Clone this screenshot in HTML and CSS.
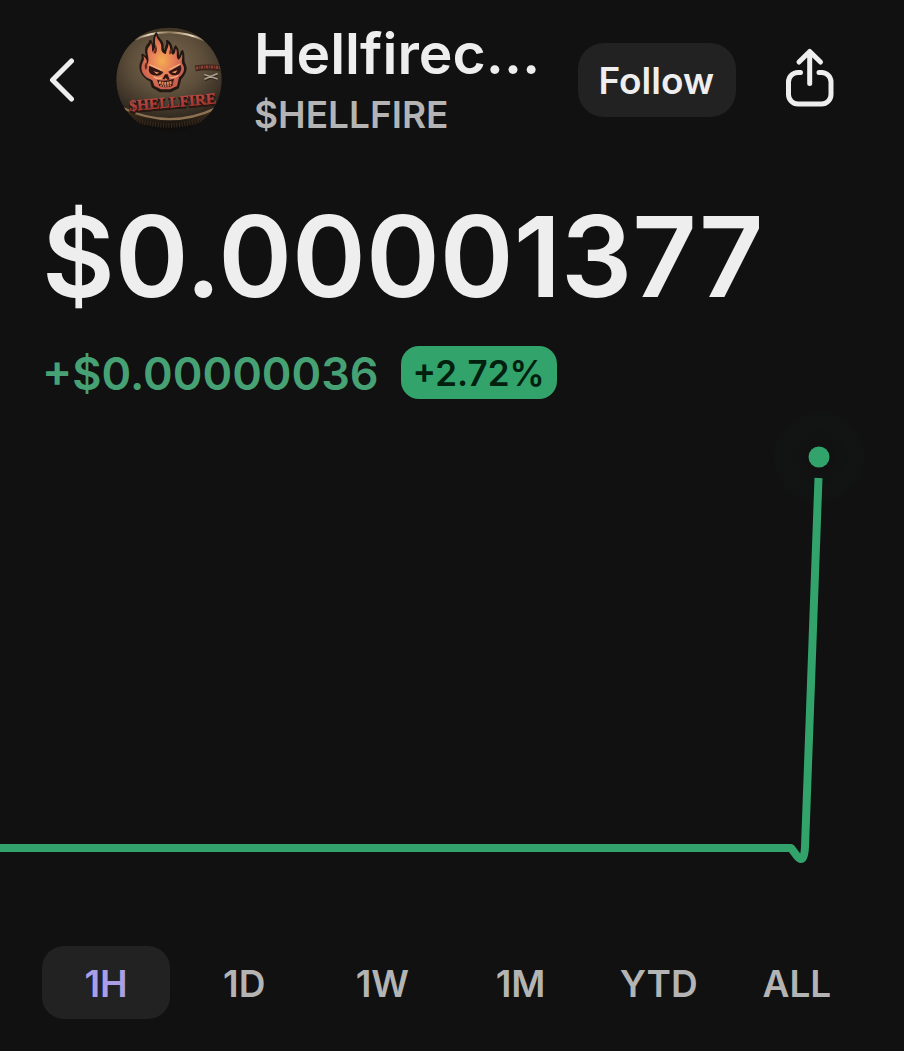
FILE: index.html
```html
<!DOCTYPE html>
<html lang="en">
<head>
<meta charset="utf-8">
<meta name="viewport" content="width=device-width, initial-scale=1">
<title>Hellfirecoin</title>
<link rel="stylesheet" href="styles.css">
</head>
<body>
<header class="header">
  <button class="icon-button back" aria-label="Back">
    <svg width="26" height="46" viewBox="0 0 26 46" fill="none" stroke="currentColor" stroke-width="5" stroke-linecap="round" stroke-linejoin="round"><path d="M22.500 4 3.500 23l19 19"/></svg>
  </button>
  <svg class="avatar" viewBox="45 36 318 318" role="img" aria-label="Token logo">
    <defs>
      <clipPath id="round"><circle cx="204" cy="195" r="158"/></clipPath>
      <radialGradient id="leather" cx=".48" cy=".36" r=".65">
        <stop offset="0" stop-color="#7d6b51"/><stop offset=".55" stop-color="#5c4d3a"/><stop offset="1" stop-color="#30281f"/>
      </radialGradient>
      <linearGradient id="base" x2="0" y2="1">
        <stop offset="0" stop-color="#493620"/><stop offset=".75" stop-color="#110f0e"/>
      </linearGradient>
      <radialGradient id="flame" cx=".48" cy=".47" r=".5">
        <stop offset="0" stop-color="#f5ad51"/><stop offset=".5" stop-color="#e88258"/><stop offset="1" stop-color="#c9604f"/>
      </radialGradient>
      <linearGradient id="seam"><stop offset="0" stop-color="#6e5740"/><stop offset=".2" stop-color="#eadbc1"/><stop offset=".5" stop-color="#8b7456"/><stop offset=".82" stop-color="#eadbc1"/><stop offset="1" stop-color="#62503b"/></linearGradient>
      <linearGradient id="lettering" x2="0" y2="1"><stop offset="0" stop-color="#c9564c"/><stop offset="1" stop-color="#982b29"/></linearGradient>
    </defs>
    <g clip-path="url(#round)">
      <path fill="#131110" d="M45 36h318v318H45z"/>
      <path fill="#423726" d="M105 66Q205 10 308 68L280 80H130z"/>
      <path fill="url(#leather)" d="M105 74Q204 26 308 74Q353 96 363 160V235Q360 267 340 282Q205 344 68 276Q48 254 45 220V170Q57 98 105 74z"/>
      <path fill="none" stroke="url(#seam)" stroke-width="6" d="M102 75Q148 51 205 52T310 77"/>
      <path fill="url(#base)" d="M68 280Q205 345 343 280L310 325Q205 380 108 325z"/>
      <path fill="none" stroke="#8c7152" stroke-width="7" d="M66 279Q205 345 344 280"/>
      <path fill="none" stroke="#3c2c1a" stroke-width="14" stroke-dasharray="3 5" d="M100 313Q204 350 306 312"/>
      <path fill="none" stroke="#3f3428" stroke-width="11" stroke-dasharray="2 5" d="M160 287Q200 293 240 285"/>
      <path fill="#241813" stroke="#241813" stroke-width="6" stroke-linejoin="round" d="M138 191C120 177 113 157 122 139C126 132 127 128 124 119C135 125 138 132 137 143C144 128 127 108 139 92C143 87 147 84 148 77C157 88 151 98 153 106C166 90 151 74 166 55C166 72 187 75 185 94C184 103 187 108 193 111C191 96 203 88 198 78C217 88 208 103 216 112C222 108 219 99 224 94C235 105 227 118 234 127C241 122 239 113 244 108C252 126 243 135 250 146C260 164 249 178 238 192L231 218L208 229H178L155 216L150 198z"/>
      <path fill="url(#flame)" d="M138 188C122 178 117 159 125 142C129 135 130 130 127 123C136 130 139 138 138 149C151 132 131 111 143 96C147 91 149 88 150 83C155 94 151 102 155 112C171 93 155 78 166 61C168 76 181 79 181 96C180 108 185 116 195 117C196 102 205 94 201 86C211 94 204 108 215 119C226 115 221 106 225 101C231 112 223 123 232 134C240 130 240 122 243 117C246 130 239 139 246 150C253 162 248 177 234 187L228 213L207 223H180L160 213L154 196z"/>
      <path fill="#6d291b" d="M157 114q8-17 5-27q11 13 2 29zm53-14q-8 10-4 19q13-7 4-19zm-74 40q-9 12-2 25q9-9 2-25z"/>
      <path fill="#321515" d="M145 152L187 171Q179 186 158 181Q145 178 143 166zM239 150L202 170Q210 184 229 180Q240 174 241 160zM192 178L184 193H191L194 188L199 194H206L200 178zM168 194Q192 202 219 191L214 213Q195 221 175 213z"/>
      <path fill="none" stroke="#f5ae7b" stroke-width="4" d="M145 149L184 166M205 164L237 147M158 185Q170 193 182 189M208 187Q221 190 232 181"/>
      <path fill="#f6965d" d="M157 169l18 4l-8 4zM212 172l18-6l-7 9z"/>
      <path fill="none" stroke="#e08a5c" stroke-width="9" stroke-dasharray="6 2" d="M174 202Q195 209 214 201"/>
      <path fill="none" stroke="#d17452" stroke-width="5" stroke-dasharray="5 2" d="M178 211Q195 216 210 210"/>
      <g transform="rotate(-5 210 265)">
        <text class="crest-title" x="85" y="281" fill="#281611" stroke="#281611" stroke-width="6">$HELLFIRE</text>
        <text class="crest-title" x="85" y="277" fill="url(#lettering)" stroke="#b5463d" stroke-width="1">$HELLFIRE</text>
      </g>
      <path fill="none" stroke="#3c231b" stroke-width="17" d="M283 160Q320 154 359 160"/>
      <path fill="none" stroke="#8c3f32" stroke-width="9" stroke-dasharray="7 3 3 2" d="M285 159Q320 153 359 158"/>
      <path fill="none" stroke="#32281f" stroke-width="9" d="M311 180l38 13m-37 2l36-17"/>
      <path fill="none" stroke="#aaa18c" stroke-width="5" stroke-linecap="round" d="M312 179l36 12m-36 1l36-16"/>
    </g>
  </svg>
  <div class="token">
    <h1 class="token-name">Hellfirec…</h1>
    <p class="token-symbol">$HELLFIRE</p>
  </div>
  <button class="follow">Follow</button>
  <button class="icon-button share" aria-label="Share">
    <svg width="50" height="60" viewBox="0 0 50 60" fill="none" stroke="currentColor" stroke-width="5" stroke-linecap="round" stroke-linejoin="round"><path d="M15.500 24.500H13a9.500 9.500 0 0 0-9.500 9.500v12.500a9.500 9.500 0 0 0 9.500 9.500h23.500a9.500 9.500 0 0 0 9.500-9.500V34a9.500 9.500 0 0 0-9.500-9.500H34M24.700 35.500V3.500M14 14 24.700 3.500 35.500 14"/></svg>
  </button>
</header>
<main>
  <p class="price">$0.00001377</p>
  <div class="change">
    <span class="change-value">+$0.00000036</span>
    <span class="badge">+2.72%</span>
  </div>
  <svg class="chart" viewBox="0 0 904 504" role="img" aria-label="Price over the last hour">
    <defs>
      <radialGradient id="halo">
        <stop offset=".3" stop-color="#111111"/><stop offset=".7" stop-color="#111413"/><stop offset="1" stop-color="#111312"/>
      </radialGradient>
    </defs>
    <circle cx="819" cy="58" r="45" fill="url(#halo)"/>
    <path d="M0 449H791L797 457Q804 466 805 448L818.500 79" fill="none" stroke="#33a36c" stroke-width="8" stroke-linejoin="round"/>
    <circle cx="819" cy="58" r="10.500" fill="#33a36c"/>
  </svg>
  <nav class="ranges" aria-label="Time range">
    <button class="range active" aria-pressed="true">1H</button>
    <button class="range">1D</button>
    <button class="range">1W</button>
    <button class="range">1M</button>
    <button class="range">YTD</button>
    <button class="range">ALL</button>
  </nav>
</main>
</body>
</html>
```
FILE: styles.css
```css
* {
  box-sizing: border-box;
}

body {
  margin: 0;
  background: #111111;
  color: #eeeeee;
  font-family: Inter, "Liberation Sans", sans-serif;
  font-weight: 600;
}

h1,
p {
  margin: 0;
  font-weight: 600;
}

button {
  border: 0;
  padding: 0;
  background: none;
  color: inherit;
  font: inherit;
  cursor: pointer;
}

.header {
  display: flex;
  align-items: center;
  padding: 23px 69px 0 49px;
}

.icon-button {
  display: flex;
  flex: none;
}

.back {
  margin-right: 41px;
}

.avatar {
  flex: none;
  width: 106px;
  height: 106px;
  margin-right: 32px;
}

.crest-title {
  font-family: "Liberation Serif", serif;
  font-size: 46px;
  font-weight: 700;
}

.token {
  display: flex;
  flex: 1;
  flex-direction: column;
  gap: 8px;
  min-width: 0;
}

.token-name {
  font-size: 57px;
  line-height: 62px;
  white-space: nowrap;
}

.token-symbol {
  color: #b4b4b4;
  font-size: 37px;
  line-height: 44px;
}

.follow {
  flex: none;
  padding: 2px 22px 0 21px;
  border-radius: 26px;
  background: #222222;
  font-size: 37px;
  line-height: 72px;
}

.share {
  margin-left: 49px;
  padding-bottom: 4px;
}

.price {
  padding: 0 42px;
  margin-top: 59px;
  font-size: 112px;
  line-height: 120px;
}

.change {
  display: flex;
  align-items: center;
  gap: 22px;
  margin-top: 30px;
  padding: 0 42px;
}

.change-value {
  padding-top: 2px;
  color: #46a274;
  font-size: 45px;
  line-height: 50px;
}

.badge {
  padding: 2px 12px 0;
  border-radius: 18px;
  background: #33a36c;
  color: #03200f;
  font-size: 35px;
  line-height: 51px;
}

.chart {
  display: block;
  width: 100%;
  height: auto;
}

.ranges {
  display: grid;
  grid-template-columns: repeat(6, 1fr);
  gap: 10px;
  padding: 43px 43px 32px 42px;
}

.range {
  padding-top: 2px;
  border-radius: 22px;
  color: #b4b4b4;
  font-size: 37px;
  line-height: 71px;
}

.active {
  background: #222222;
  color: #aa9fe6;
}
```
